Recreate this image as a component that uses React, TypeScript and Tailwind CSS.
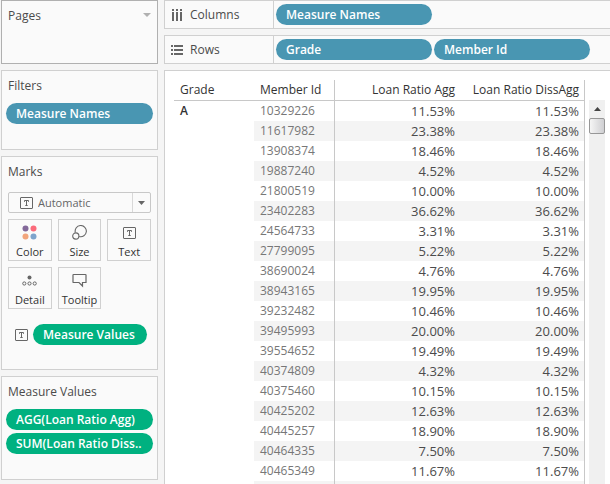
import React from 'react';

const rows: [string, string][] = [
  ['10329226', '11.53%'],
  ['11617982', '23.38%'],
  ['13908374', '18.46%'],
  ['19887240', '4.52%'],
  ['21800519', '10.00%'],
  ['23402283', '36.62%'],
  ['24564733', '3.31%'],
  ['27799095', '5.22%'],
  ['38690024', '4.76%'],
  ['38943165', '19.95%'],
  ['39232482', '10.46%'],
  ['39495993', '20.00%'],
  ['39554652', '19.49%'],
  ['40374809', '4.32%'],
  ['40375460', '10.15%'],
  ['40425202', '12.63%'],
  ['40445257', '18.90%'],
  ['40464335', '7.50%'],
  ['40465349', '11.67%'],
  ['', ''],
];

function TextIcon() {
  return (
    <svg width="13" height="12" viewBox="0 0 13 12" className="shrink-0" fill="none" stroke="#666" aria-hidden="true">
      <rect x="0.5" y="0.5" width="12" height="11" rx="0.5" />
      <path d="M4.5 4.8V3.5H8.5V4.8M6.5 3.5V8.5M5.3 8.5H7.7" />
    </svg>
  );
}

function ColorIcon() {
  return (
    <svg width="15" height="15" viewBox="0 0 15 15" aria-hidden="true">
      <circle cx="3.5" cy="3.5" r="3" fill="#83699a" />
      <circle cx="11.5" cy="3.5" r="3" fill="#fb6b7b" />
      <circle cx="3.5" cy="11.5" r="3" fill="#f2a57c" />
      <circle cx="11.5" cy="11.5" r="3" fill="#7ea4cc" />
    </svg>
  );
}

function SizeIcon() {
  return (
    <svg width="15" height="15" viewBox="0 0 15 15" fill="none" stroke="#666" strokeWidth="1.1" aria-hidden="true">
      <path d="M3.3 7.4A5.6 5.6 0 1 1 7.2 11.5" />
      <circle cx="3.8" cy="11" r="3.1" />
    </svg>
  );
}

function DetailIcon() {
  return (
    <svg width="15" height="15" viewBox="0 0 15 15" fill="none" stroke="#666" aria-hidden="true">
      <circle cx="7.5" cy="4.5" r="2" fill="#666" stroke="none" />
      <circle cx="2.3" cy="10.5" r="1.6" />
      <circle cx="7.5" cy="10.5" r="1.6" />
      <circle cx="12.7" cy="10.5" r="1.6" />
    </svg>
  );
}

function TooltipIcon() {
  return (
    <svg width="15" height="15" viewBox="0 0 15 15" fill="none" stroke="#666" strokeWidth="1.2" aria-hidden="true">
      <path d="M1.6 1.5H13.4Q14 1.5 14 2.1V9.5H10.5V13L7 9.5H1.6Q1 9.5 1 8.9V2.1Q1 1.5 1.6 1.5Z" />
    </svg>
  );
}

function Pill({ label, tone = 'blue', className = '' }: { label: string; tone?: 'blue' | 'green'; className?: string }) {
  const color = tone === 'blue' ? 'bg-[#4996b2]' : 'bg-[#00b180]';
  return (
    <button type="button" className={`h-[21px] overflow-hidden rounded-full px-2.5 text-left leading-[21px] font-semibold whitespace-nowrap text-white ${color} ${className}`}>
      {label}
    </button>
  );
}

function Card({ title, className = '', children }: { title: string; className?: string; children?: React.ReactNode }) {
  return (
    <section className={`border border-[#d0d0d0] bg-[#fafafa] pt-1.5 ${className}`}>
      <h2 className="px-1.5 leading-[18px]">{title}</h2>
      {children}
    </section>
  );
}

function MarkButton({ label, icon }: { label: string; icon: React.ReactNode }) {
  return (
    <button type="button" className="flex h-[42px] flex-col items-center justify-between border border-[#d0d0d0] bg-[#fafafa] pt-[5px] text-[11px] leading-4 text-[#333]">
      <span className="flex h-[15px] items-center">{icon}</span>
      {label}
    </button>
  );
}

function Shelf({ title, icon, children }: { title: string; icon: React.ReactNode; children: React.ReactNode }) {
  return (
    <section className="flex h-[29px] border-y border-l border-[#d0d0d0] bg-[#fafafa]">
      <h2 className="flex w-[109px] shrink-0 items-center gap-[7px] border-r border-[#d0d0d0] pl-1.5">
        {icon}
        {title}
      </h2>
      <div className="flex min-w-0 flex-1 items-center gap-0.5 overflow-hidden pl-0.5">{children}</div>
    </section>
  );
}

export default function App() {
  return (
    <div className="flex h-screen gap-1.5 overflow-hidden bg-[#f5f5f5] pl-px font-['Open_Sans','Noto_Sans',sans-serif] text-[12px] text-[#4b4b4b]">
      <aside className="flex w-[157px] shrink-0 flex-col gap-1.5">
        <section className="flex h-16 shrink-0 items-start justify-between border border-[#b0b0b0] bg-[#fafafa] px-1.5 pt-1.5">
          <h2 className="leading-[18px]">Pages</h2>
          <button type="button" aria-label="Pages menu" className="pt-1.5">
            <svg width="8" height="4" viewBox="0 0 8 4" fill="#b0b0b0" aria-hidden="true">
              <path d="M0 0H8L4 4Z" />
            </svg>
          </button>
        </section>

        <Card title="Filters" className="h-20 shrink-0">
          <div className="flex flex-col px-1 pt-2">
            <Pill label="Measure Names" />
          </div>
        </Card>

        <Card title="Marks" className="h-[214px] shrink-0">
          <div className="flex flex-col gap-1.5 px-1.5 pt-[11px]">
            <label className="grid h-[21px] grid-cols-[11px_13px_1fr_18px] items-center rounded-xs border border-[#c8c8c8] bg-[#fafafa]">
              <span className="col-start-2 row-start-1">
                <TextIcon />
              </span>
              <select aria-label="Mark type" className="col-span-3 col-start-1 row-start-1 h-[19px] w-full appearance-none bg-transparent pl-[29px] text-[11px] leading-[18px] text-[#666]">
                <option>Automatic</option>
                <option>Bar</option>
                <option>Line</option>
                <option>Text</option>
              </select>
              <span className="col-start-4 row-start-1 flex h-[19px] items-center justify-center border-l border-[#d8d8d8]">
                <svg width="7" height="4" viewBox="0 0 7 4" fill="#666" aria-hidden="true">
                  <path d="M0 0H7L3.5 4Z" />
                </svg>
              </span>
            </label>
            <div className="grid grid-cols-3 gap-1.5">
              <MarkButton label="Color" icon={<ColorIcon />} />
              <MarkButton label="Size" icon={<SizeIcon />} />
              <MarkButton label="Text" icon={<TextIcon />} />
              <MarkButton label="Detail" icon={<DetailIcon />} />
              <MarkButton label="Tooltip" icon={<TooltipIcon />} />
            </div>
          </div>
          <div className="flex items-center gap-[5px] pt-[15px] pl-[13px]">
            <TextIcon />
            <Pill label="Measure Values" tone="green" className="w-[114px]" />
          </div>
        </Card>

        <Card title="Measure Values" className="h-[104px] shrink-0">
          <div className="flex flex-col gap-[3px] px-1 pt-2">
            <Pill label="AGG(Loan Ratio Agg)" tone="green" />
            <Pill label="SUM(Loan Ratio Diss.." tone="green" />
          </div>
        </Card>
      </aside>

      <main className="flex min-w-0 flex-1 flex-col gap-1.5">
        <Shelf
          title="Columns"
          icon={
            <svg width="12" height="12" viewBox="0 0 12 12" fill="#666" aria-hidden="true">
              <path d="M1 0h2v2H1zM5 0h2v2H5zM9 0h2v2H9zM1 3h2v9H1zM5 3h2v9H5zM9 3h2v9H9z" />
            </svg>
          }
        >
          <Pill label="Measure Names" className="w-[156px] shrink-0" />
        </Shelf>
        <Shelf
          title="Rows"
          icon={
            <svg width="12" height="12" viewBox="0 0 12 12" fill="#666" aria-hidden="true">
              <path d="M0 1h2v2H0zM0 5h2v2H0zM0 9h2v2H0zM3 1h9v2H3zM3 5h9v2H3zM3 9h9v2H3z" />
            </svg>
          }
        >
          <Pill label="Grade" className="w-[156px] shrink-0" />
          <Pill label="Member Id" className="w-[156px] shrink-0" />
        </Shelf>

        <section className="flex min-h-0 flex-1 items-start overflow-hidden border-t border-l border-[#d0d0d0] bg-white pt-[9px] pr-[5px] pl-[9px]">
          <div className="min-w-0 flex-1">
            <table id="view" className="w-full table-fixed border-separate border-spacing-0">
              <colgroup>
                <col className="w-20" />
                <col className="w-[81px]" />
                <col />
                <col />
              </colgroup>
              <thead>
                <tr className="h-[21px] text-[#333]">
                  <th className="border-b border-[#c8c8c8] pl-1.5 text-left leading-5 font-medium">Grade</th>
                  <th className="border-r border-b border-[#c8c8c8] pl-1.5 text-left leading-5 font-medium">Member Id</th>
                  <th className="border-b border-[#c8c8c8] pr-[5px] text-right leading-5 font-medium">Loan Ratio Agg</th>
                  <th className="border-r border-b border-[#c8c8c8] pr-[5px] text-right leading-5 font-medium whitespace-nowrap">Loan Ratio DissAgg</th>
                </tr>
              </thead>
              <tbody>
                {rows.map(([id, value], i) => {
                  const band = i % 2 === 1 ? 'bg-[#f4f4f4]' : 'bg-white';
                  return (
                    <tr key={i} className="h-5 leading-5">
                      {i === 0 && (
                        <th scope="rowgroup" rowSpan={rows.length} className="pl-1.5 text-left align-top font-semibold text-[#333]">
                          A
                        </th>
                      )}
                      <td className={`border-r border-[#c8c8c8] pl-1.5 text-[#777] ${band}`}>{id}</td>
                      <td className={`pr-[5px] text-right text-[13px] ${band}`}>{value}</td>
                      <td className={`border-r border-[#c8c8c8] pr-[5px] text-right text-[13px] ${band}`}>{value}</td>
                    </tr>
                  );
                })}
              </tbody>
            </table>
          </div>
          <div className="mt-5 ml-1 flex w-4 flex-col self-stretch bg-[#f0f0f0]" role="scrollbar" aria-label="Table rows" aria-controls="view" aria-valuenow={0}>
            <div className="flex h-[18px] items-center justify-center">
              <svg width="7" height="4" viewBox="0 0 7 4" fill="#444" aria-hidden="true">
                <path d="M3.5 0L7 4H0Z" />
              </svg>
            </div>
            <div className="h-4 rounded-xs border border-[#979797] bg-linear-to-r from-[#f5f5f5] to-[#cfcfd2]" />
          </div>
        </section>
      </main>
    </div>
  );
}
